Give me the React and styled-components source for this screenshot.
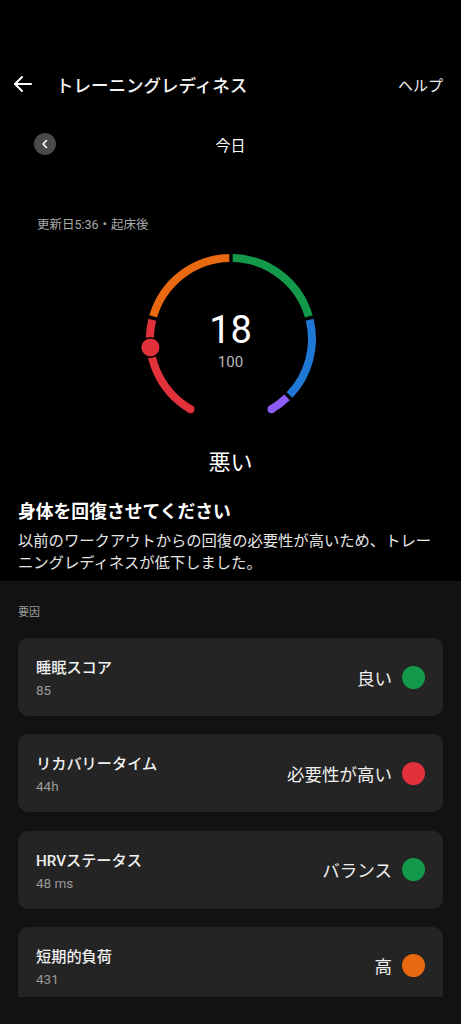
import React from "react";
import styled, { createGlobalStyle } from "styled-components";

const GlobalStyle = createGlobalStyle`
    * { box-sizing: border-box; }
    body {
        margin: 0;
        background: #000;
        font-family: "Roboto", "Noto Sans CJK JP", sans-serif;
        color: #fff;
    }
`;

const ZONES = [
    { from: 0, to: 25, color: "#e1313a" },
    { from: 25, to: 50, color: "#e8690f" },
    { from: 50, to: 75, color: "#12994a" },
    { from: 75, to: 95, color: "#1f78d6" },
    { from: 95, to: 100, color: "#8b5cf6" },
];

const FACTORS = [
    { title: "睡眠スコア", value: "85", status: "良い", color: "#12994a" },
    { title: "リカバリータイム", value: "44h", status: "必要性が高い", color: "#e1313a" },
    { title: "HRVステータス", value: "48 ms", status: "バランス", color: "#12994a" },
    { title: "短期的負荷", value: "431", status: "高", color: "#e8690f" },
];

const CX = 100;
const CY = 100;
const R = 81;
const START = 210;
const SPAN = 300;
const GAP = 1.2;

const toDeg = (score) => START + (score / 100) * SPAN;

const point = (deg) => {
    const rad = (deg * Math.PI) / 180;
    return [CX + R * Math.sin(rad), CY - R * Math.cos(rad)];
};

const arc = (a, b) => {
    const [x1, y1] = point(a);
    const [x2, y2] = point(b);
    const large = b - a > 180 ? 1 : 0;
    return `M${x1} ${y1} A${R} ${R} 0 ${large} 1 ${x2} ${y2}`;
};

const Gauge = ({ score }) => {
    const [mx, my] = point(toDeg(score));
    const [sx, sy] = point(toDeg(0));
    const [ex, ey] = point(toDeg(100));

    return (
        <GaugeWrap>
            <svg width="200" height="200" viewBox="0 0 200 200">
                {ZONES.map((z, i) => (
                    <path
                        key={z.color}
                        d={arc(
                            toDeg(z.from) + (i === 0 ? 0 : GAP),
                            toDeg(z.to) - (i === ZONES.length - 1 ? 0 : GAP)
                        )}
                        stroke={z.color}
                        strokeWidth="8"
                        fill="none"
                    />
                ))}
                <circle cx={sx} cy={sy} r="4" fill={ZONES[0].color} />
                <circle cx={ex} cy={ey} r="4" fill={ZONES[4].color} />
                <circle cx={mx} cy={my} r="10.5" fill="#000" />
                <circle cx={mx} cy={my} r="9" fill="#e1313a" />
            </svg>
            <GaugeCenter>
                <Score>{score}</Score>
                <ScoreMax>100</ScoreMax>
            </GaugeCenter>
        </GaugeWrap>
    );
};

const FactorCard = ({ title, value, status, color }) => (
    <Card>
        <CardText>
            <CardTitle>{title}</CardTitle>
            <CardValue>{value}</CardValue>
        </CardText>
        <Status>
            <StatusLabel>{status}</StatusLabel>
            <Dot $color={color} />
        </Status>
    </Card>
);

const App = () => {
    return (
        <>
            <GlobalStyle />
            <Page>
                <Top>
                    <Header>
                        <IconButton aria-label="戻る">
                            <svg width="24" height="24" viewBox="0 0 24 24" fill="none" stroke="#fff" strokeWidth="2" strokeLinecap="round" strokeLinejoin="round">
                                <path d="M20 12H4" />
                                <path d="M11 5l-7 7 7 7" />
                            </svg>
                        </IconButton>
                        <Title>トレーニングレディネス</Title>
                        <Help>ヘルプ</Help>
                    </Header>

                    <DateRow>
                        <PrevButton aria-label="前日">
                            <svg width="12" height="12" viewBox="0 0 12 12" fill="none" stroke="#fff" strokeWidth="1.6" strokeLinecap="round" strokeLinejoin="round">
                                <path d="M7.5 2.5L4 6l3.5 3.5" />
                            </svg>
                        </PrevButton>
                        <DateLabel>今日</DateLabel>
                        <span />
                    </DateRow>

                    <Updated>更新日5:36・起床後</Updated>

                    <Gauge score={18} />

                    <Level>悪い</Level>

                    <Advice>
                        <AdviceTitle>身体を回復させてください</AdviceTitle>
                        <AdviceText>
                            以前のワークアウトからの回復の必要性が高いため、トレーニングレディネスが低下しました。
                        </AdviceText>
                    </Advice>
                </Top>

                <Factors>
                    <SectionLabel>要因</SectionLabel>
                    <CardList>
                        {FACTORS.map((f) => (
                            <FactorCard key={f.title} {...f} />
                        ))}
                    </CardList>
                </Factors>
            </Page>
        </>
    );
};

export default App;

const Page = styled.div`
    width: 461px;
    height: 1024px;
    overflow: hidden;
    display: flex;
    flex-direction: column;
    background: #000;
`;

const Top = styled.div`
    display: flex;
    flex-direction: column;
    padding-top: 60px;
    padding-bottom: 7px;
`;

const Header = styled.div`
    height: 48px;
    display: flex;
    align-items: center;
    padding: 0 18px 0 11px;
    gap: 21px;
`;

const IconButton = styled.button`
    background: none;
    border: 0;
    padding: 0;
    width: 24px;
    height: 24px;
    display: flex;
    align-items: center;
    justify-content: center;
`;

const Title = styled.h1`
    flex: 1;
    margin: 0;
    font-size: 17.5px;
    font-weight: 500;
    color: #f4f4f4;
`;

const Help = styled.span`
    font-size: 15px;
    color: #eee;
`;

const DateRow = styled.div`
    margin-top: 16px;
    height: 40px;
    display: grid;
    grid-template-columns: 1fr auto 1fr;
    align-items: center;
    padding: 0 34px;
`;

const PrevButton = styled.button`
    width: 22px;
    height: 22px;
    border-radius: 50%;
    border: 0;
    padding: 0;
    background: #4a4a4a;
    display: flex;
    align-items: center;
    justify-content: center;
`;

const DateLabel = styled.span`
    font-size: 15px;
    color: #fff;
`;

const Updated = styled.div`
    margin-top: 51px;
    padding-left: 37px;
    font-size: 12.5px;
    line-height: 20px;
    color: #aaa;
`;

const GaugeWrap = styled.div`
    position: relative;
    margin-top: 4px;
    align-self: center;
    width: 200px;
    height: 200px;
`;

const GaugeCenter = styled.div`
    position: absolute;
    top: 70px;
    left: 0;
    right: 0;
    display: flex;
    flex-direction: column;
    align-items: center;
    gap: 1px;
`;

const Score = styled.div`
    font-size: 38px;
    line-height: 42px;
    color: #fff;
`;

const ScoreMax = styled.div`
    font-size: 15px;
    line-height: 20px;
    color: #bbb;
`;

const Level = styled.div`
    margin-top: 9px;
    text-align: center;
    font-size: 22px;
    line-height: 30px;
    color: #fff;
`;

const Advice = styled.div`
    margin-top: 21px;
    padding: 0 18px;
    display: flex;
    flex-direction: column;
    gap: 5px;
`;

const AdviceTitle = styled.h2`
    margin: 0;
    font-size: 17.8px;
    line-height: 26px;
    font-weight: 700;
    color: #fff;
`;

const AdviceText = styled.p`
    margin: 0;
    font-size: 15.3px;
    line-height: 22px;
    color: #e6e6e6;
`;

const Factors = styled.div`
    flex: 1;
    background: #121212;
    padding: 24px 18px 0;
    display: flex;
    flex-direction: column;
`;

const SectionLabel = styled.div`
    font-size: 11px;
    line-height: 16px;
    color: #999;
`;

const CardList = styled.div`
    margin-top: 17px;
    height: 359px;
    overflow: hidden;
    display: flex;
    flex-direction: column;
    gap: 18.3px;
`;

const Card = styled.div`
    flex-shrink: 0;
    height: 78px;
    border-radius: 10px;
    background: #242424;
    display: flex;
    align-items: center;
    justify-content: space-between;
    padding: 0 18px;
`;

const CardText = styled.div`
    margin-top: 3px;
    display: flex;
    flex-direction: column;
    gap: 3px;
`;

const CardTitle = styled.div`
    font-size: 15.2px;
    line-height: 20px;
    font-weight: 500;
    color: #f0f0f0;
`;

const CardValue = styled.div`
    font-size: 13.5px;
    line-height: 18px;
    color: #9a9a9a;
`;

const Status = styled.div`
    display: flex;
    align-items: center;
    gap: 10px;
`;

const StatusLabel = styled.span`
    font-size: 17.5px;
    color: #eee;
`;

const Dot = styled.span`
    width: 23px;
    height: 23px;
    border-radius: 50%;
    background: ${({ $color }) => $color};
`;
